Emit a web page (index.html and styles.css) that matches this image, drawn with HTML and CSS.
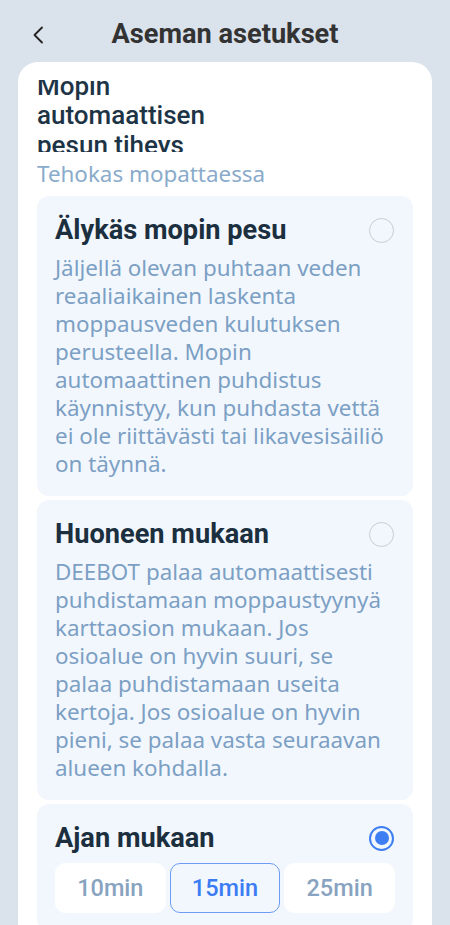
FILE: index.html
```html
<!DOCTYPE html>
<html lang="fi">
<head>
<meta charset="utf-8">
<link rel="stylesheet" href="styles.css">
</head>
<body>
<div class="screen">
  <header class="topbar">
    <span class="back">
      <svg width="12" height="18" viewBox="0 0 12 18"><path d="M10 1.5 L2.5 9 L10 16.5" fill="none" stroke="#222" stroke-width="1.8" stroke-linecap="round" stroke-linejoin="round"/></svg>
    </span>
    <h1 class="title">Aseman asetukset</h1>
  </header>
  <main class="card">
    <div class="head-clip">
      <div class="head-text">Mopin<br>automaattisen<br>pesun tiheys</div>
    </div>
    <div class="subtitle">Tehokas mopattaessa</div>

    <section class="option">
      <div class="option-head">
        <span class="option-title">Älykäs mopin pesu</span>
        <span class="radio"></span>
      </div>
      <p class="option-desc">Jäljellä olevan puhtaan veden reaaliaikainen laskenta moppausveden kulutuksen perusteella. Mopin automaattinen puhdistus käynnistyy, kun puhdasta vettä ei ole riittävästi tai likavesisäiliö on täynnä.</p>
    </section>

    <section class="option">
      <div class="option-head">
        <span class="option-title">Huoneen mukaan</span>
        <span class="radio"></span>
      </div>
      <p class="option-desc">DEEBOT palaa automaattisesti puhdistamaan moppaustyynyä karttaosion mukaan. Jos osioalue on hyvin suuri, se palaa puhdistamaan useita kertoja. Jos osioalue on hyvin pieni, se palaa vasta seuraavan alueen kohdalla.</p>
    </section>

    <section class="option option-last">
      <div class="option-head">
        <span class="option-title">Ajan mukaan</span>
        <span class="radio radio-on"></span>
      </div>
      <div class="chips">
        <span class="chip">10min</span>
        <span class="chip chip-on">15min</span>
        <span class="chip">25min</span>
      </div>
    </section>
  </main>
</div>
</body>
</html>
```

FILE: styles.css
```css
* { box-sizing: border-box; }
html, body {
  margin: 0;
  padding: 0;
  background: #dae2ec;
  font-family: "Noto Sans", Roboto, "Liberation Sans", sans-serif;
}
.screen {
  width: 450px;
  height: 925px;
  overflow: hidden;
  padding: 0 18px;
}
.topbar {
  position: relative;
  height: 62px;
  display: flex;
  justify-content: center;
  padding-top: 18px;
}
.back {
  position: absolute;
  left: 14px;
  top: 26px;
  width: 12px;
  height: 18px;
  display: flex;
}
.title {
  margin: 0;
  font-family: Roboto, "Noto Sans", sans-serif;
  font-size: 27.2px;
  line-height: 32px;
  font-weight: 700;
  color: #333333;
}
.card {
  background: #ffffff;
  border-radius: 20px 20px 0 0;
  padding: 18px 19px 0 19px;
  min-height: 900px;
}
.head-clip {
  height: 72px;
  overflow: hidden;
}
.head-text {
  margin-top: -8.5px;
  font-family: Roboto, "Noto Sans", sans-serif;
  font-size: 26px;
  line-height: 29.5px;
  font-weight: 500;
  color: #1d3446;
}
.subtitle {
  margin-top: 8px;
  font-size: 22.4px;
  line-height: 28px;
  color: #8aabcb;
}
.option {
  margin-top: 8px;
  background: #f2f7fd;
  border-radius: 12px;
  padding: 17px 18px 18px 18px;
}
.option + .option { margin-top: 4px; }
.option-head {
  display: flex;
  align-items: center;
  justify-content: space-between;
  height: 34px;
}
.option-title {
  font-family: Roboto, "Noto Sans", sans-serif;
  font-size: 27.2px;
  font-weight: 700;
  color: #1b2f3f;
}
.radio {
  width: 25px;
  height: 25px;
  border-radius: 50%;
  border: 1.6px solid #c9cdd2;
  margin-right: 1px;
  position: relative;
}
.radio-on {
  border: 2.2px solid #3d7ef3;
}
.radio-on::after {
  content: "";
  position: absolute;
  left: 50%;
  top: 50%;
  width: 14px;
  height: 14px;
  margin: -7px 0 0 -7px;
  border-radius: 50%;
  background: #3d7ef3;
}
.option-desc {
  margin: 7px 0 0 0;
  font-size: 22.4px;
  line-height: 28px;
  color: #7c9fc4;
}
.chips {
  margin-top: 8px;
  display: grid;
  grid-template-columns: 1fr 1fr 1fr;
  gap: 4px;
}
.chip {
  height: 50px;
  border-radius: 10px;
  background: #ffffff;
  display: flex;
  align-items: center;
  justify-content: center;
  font-family: Roboto, "Noto Sans", sans-serif;
  font-size: 23.5px;
  font-weight: 500;
  color: #88a3c0;
  border: 1px solid #ffffff;
}
.chip-on {
  background: #f2f7fe;
  border: 1px solid #6d9cf2;
  color: #3b7cf3;
}
```
